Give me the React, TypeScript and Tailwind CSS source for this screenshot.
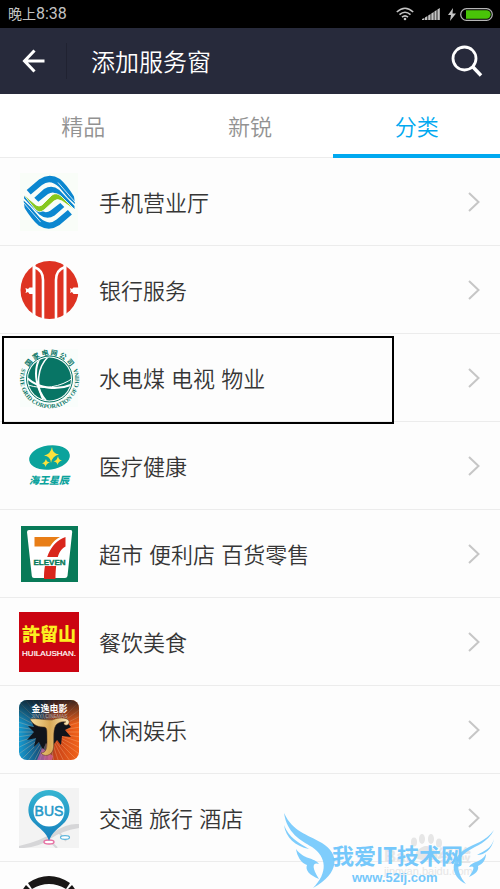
import { useState } from 'react';
import type { ReactNode } from 'react';

interface Category {
  name: string;
  logo: ReactNode;
  marked?: boolean;
}

const RAYS = Array.from({ length: 40 }, (_, i) => {
  const angle = (i * Math.PI) / 20;
  return `M30 32L${30 + 50 * Math.cos(angle)} ${32 + 50 * Math.sin(angle)}`;
}).join('');

const MobileHalf = () => (
  <>
    <path d="M7.700 18L20 7.500Q30.300 0.500 41 7Q48 13 55 24.500L56 32L49 25.700L40 15Q31 6.500 23 13L11.700 22.500Z" fill="#0b87d0" />
    <path d="M39 10.500L56 30" fill="none" stroke="#fff" strokeWidth="0.800" />
    <path d="M15.300 25.700L25 17Q33 12 40.300 18L55.500 34V37L41 24Q35 18 29 22L19.300 29.700Z" fill="#0b87d0" />
  </>
);

const MobileLogo = () => (
  <svg viewBox="0 0 60 60" className="size-full">
    <rect x="1" y="1" width="58" height="58" fill="#f9fdf8" />
    <MobileHalf />
    <g transform="rotate(180 30.300 30.300)">
      <MobileHalf />
    </g>
    <path d="M4 22L17 33Q20 35 23 33L33 23Q37 20 42 24L56 38L43 29Q38 26 35 29L25 38Q20 42 16 37Z" fill="#86c81e" stroke="#fff" strokeWidth="0.800" />
  </svg>
);

const BankLogo = () => (
  <svg viewBox="0 0 60 60" className="size-full">
    <circle cx="30.500" cy="30" r="29" fill="#de3322" />
    <g fill="none" stroke="#fff" strokeWidth="3">
      <path d="M15 4V60M46 4V60" />
      <path d="M15 7C21 9 24 13 24 20V60" strokeWidth="2.600" />
      <path d="M46 7C40 9 37 13 37 20V60" strokeWidth="2.600" />
    </g>
    <path d="M14 27.500H10.500L9 29L6.500 28Q7.500 30.500 6.500 33L9 32L10.500 34H14ZM60 27.500H54.500L53 29L51 28Q52 30.500 51 33L53 32L54.500 34H60Z" fill="#fff" />
  </svg>
);

const GridLogo = () => (
  <svg viewBox="0 0 60 60" className="size-full overflow-visible">
    <defs>
      <path id="grid-top" d="M6.500 31A24 24 0 0 1 54.500 31" />
      <path id="grid-bottom" d="M7 13A29.500 29.500 0 1 0 54 13" />
      <clipPath id="grid-disc">
        <circle cx="30.500" cy="31" r="21.500" />
      </clipPath>
    </defs>
    <rect x="1" y="1" width="58" height="58" fill="#f9fdfb" />
    <circle cx="30.500" cy="31" r="23" fill="#fff" stroke="#087565" strokeWidth="1" />
    <circle cx="30.500" cy="31" r="21.500" fill="#087565" />
    <g fill="none" stroke="#fff" clipPath="url(#grid-disc)">
      <path d="M22 8C13 22 17 42 28 54" strokeWidth="2" />
      <path d="M31 7C17 19 17 38 25 54" strokeWidth="1.500" />
      <path d="M8 30C20 41 39 43 54 36" strokeWidth="2" />
      <path d="M9 37C24 42 42 39 54 30" strokeWidth="1" />
    </g>
    <text fill="#087565" fontSize="7" fontWeight="700" fontFamily="'Noto Sans CJK SC', sans-serif">
      <textPath href="#grid-top" startOffset="50%" textAnchor="middle">国 家 电 网 公 司</textPath>
    </text>
    <text fill="#087565" fontSize="6" fontWeight="700" fontFamily="'Liberation Serif', serif">
      <textPath href="#grid-bottom" startOffset="50%" textAnchor="middle">STATE GRID CORPORATION OF CHINA</textPath>
    </text>
  </svg>
);

const PharmacyLogo = () => (
  <svg viewBox="0 0 60 60" className="size-full">
    <ellipse cx="30.500" cy="21.500" rx="20.500" ry="12" fill="#0ba39c" transform="rotate(-8 30.500 21.500)" />
    <g fill="#fbe23c">
      <path d="M33 11Q33.500 18 40 18.500Q33.500 19.500 32 27Q31.500 20 25 19.500Q31.500 18.500 33 11Z" />
      <path d="M39 20Q39.500 24 43 24.500Q39.500 25 38.500 29Q38 25.500 34.500 25.500Q38 24.500 39 20Z" />
      <path d="M27 23Q27.500 26 31 26.500Q27.500 27 26.500 31Q26 27.500 23 27.500Q26 26.500 27 23Z" />
    </g>
    <text x="30" y="48" textAnchor="middle" fill="#0ba39c" fontSize="10" fontWeight="900" fontStyle="italic" fontFamily="'Noto Sans CJK SC', sans-serif">
      海王星辰
    </text>
  </svg>
);

const StoreLogo = () => (
  <svg viewBox="0 0 60 60" className="size-full">
    <rect x="2" y="2" width="57" height="56" fill="#087a58" />
    <path d="M10 6H51.500Q53.500 6 53.200 8L48.500 52Q48 54 46 54H15Q13 54 12.800 52L8 8Q8 6 10 6Z" fill="#fff" />
    <path d="M15.500 13H41Q35 16 31 22.500H15.500Z" fill="#e87e17" />
    <path d="M46.500 13V22.500C40 26 37 33 36.500 55H25C25 37 30 19 46.500 13Z" fill="#d9261c" />
    <rect x="13" y="33" width="35" height="9" fill="#fff" />
    <text x="30.500" y="41" textAnchor="middle" fill="#087a58" stroke="#087a58" strokeWidth="0.400" fontSize="8" fontWeight="700" fontFamily="'Liberation Sans', sans-serif">
      ELEVEN
    </text>
  </svg>
);

const DessertLogo = () => (
  <svg viewBox="0 0 60 60" className="size-full">
    <rect width="60" height="60" fill="#cb0411" />
    <text x="30" y="29" textAnchor="middle" fill="#fcee21" fontSize="18" fontWeight="900" fontFamily="'Noto Sans CJK TC', sans-serif">
      許留山
    </text>
    <text x="30" y="44" textAnchor="middle" fill="#fff" stroke="#fff" strokeWidth="0.200" fontSize="8" fontFamily="'Liberation Sans', sans-serif">
      HUILAUSHAN.
    </text>
  </svg>
);

const CinemaLogo = () => (
  <svg viewBox="0 0 60 60" className="size-full">
    <defs>
      <linearGradient id="cinema-sky">
        <stop offset="0" stopColor="#179bd0" />
        <stop offset="0.350" stopColor="#164f7a" />
        <stop offset="0.600" stopColor="#c84318" />
        <stop offset="1" stopColor="#f2641c" />
      </linearGradient>
      <linearGradient id="cinema-shade" x1="0" y1="0" x2="0" y2="1">
        <stop offset="0" stopColor="#101820" stopOpacity="0.800" />
        <stop offset="0.400" stopColor="#101820" stopOpacity="0" />
      </linearGradient>
      <linearGradient id="cinema-gold">
        <stop offset="0" stopColor="#f7e0a2" />
        <stop offset="0.500" stopColor="#d9a854" />
        <stop offset="1" stopColor="#f9e8bd" />
      </linearGradient>
      <clipPath id="cinema-tile">
        <rect width="60" height="60" rx="8" />
      </clipPath>
    </defs>
    <g clipPath="url(#cinema-tile)">
      <rect width="60" height="60" fill="url(#cinema-sky)" />
      <path d={RAYS} stroke="#ffd0a0" strokeWidth="0.700" opacity="0.400" />
      <rect width="60" height="60" fill="url(#cinema-shade)" />
      <path d="M12 20L46 20L52 27L46 30L52 37L43 36L42 45L38 40L32 48L27 43L24 50L20 42L15 47L17 38L8 40L15 32L9 26L15 27Z" fill="#10141b" />
      <path d="M18 60L23 48L34 56L33 60Z" fill="#e765b0" opacity="0.600" />
    </g>
    <path d="M11 19C18 18 25 20 33 20C38 18 43 17 48 19C52 21 50 26 46 25C44 24 45 22 47 22C42 21 39 23 37 25C33 31 36 43 34 50C32 56 25 57 22 53C29 53 28 44 28 36C28 29 28 27 24 27C17 27 13 23 11 19Z" fill="url(#cinema-gold)" stroke="#56371b" strokeWidth="0.500" />
    <text x="30.500" y="12" textAnchor="middle" fill="#fff" fontSize="9" fontWeight="700" fontFamily="'Noto Sans CJK SC', serif">
      金逸电影
    </text>
    <text x="30.500" y="18" textAnchor="middle" fill="#a3a7a8" fontSize="5" fontFamily="'Liberation Sans', sans-serif">
      JINYI CINEMAS
    </text>
  </svg>
);

const BusLogo = () => (
  <svg viewBox="0 0 60 60" className="size-full">
    <defs>
      <linearGradient id="bus-pin" x1="0" y1="0" x2="0" y2="1">
        <stop offset="0" stopColor="#35b5d2" />
        <stop offset="1" stopColor="#167fbd" />
      </linearGradient>
    </defs>
    <rect width="60" height="60" fill="#f3f3f3" />
    <path d="M0 58Q22 53 35 44T60 36V40Q42 43 31 51T5 60H0Z" fill="#d6d6d8" />
    <path d="M30 52L38 60M39 43L47 53" stroke="#d6d6d8" strokeWidth="2" />
    <ellipse cx="46" cy="49.500" rx="4.500" ry="1.800" fill="#fff" stroke="#5db6dd" strokeWidth="1.200" />
    <ellipse cx="30" cy="54" rx="5" ry="2" fill="#fff" stroke="#e76fa3" strokeWidth="1.400" />
    <path d="M30 53C28 45 20 40 14 34C4 23 11 2 30 2S56 23 46 34C40 40 32 45 30 53Z" fill="url(#bus-pin)" />
    <circle cx="30" cy="23" r="15.500" fill="#fff" />
    <text x="30" y="28" textAnchor="middle" fill="#2598c8" stroke="#2598c8" strokeWidth="0.500" fontSize="14" fontFamily="'Liberation Sans', sans-serif">
      BUS
    </text>
  </svg>
);

const RingLogo = () => (
  <svg viewBox="0 0 60 60" className="size-full">
    <path d="M9 7Q30 -7 51 7L47 13Q30 3 13 13Z" fill="#191716" />
    <path d="M7 9L11 13Q7 18 5 24L0 23Q2 15 7 9ZM53 9L49 13Q53 18 55 24L60 23Q58 15 53 9Z" fill="#191716" />
  </svg>
);

const categories: Category[] = [
  { name: '手机营业厅', logo: <MobileLogo /> },
  { name: '银行服务', logo: <BankLogo /> },
  { name: '水电煤 电视 物业', logo: <GridLogo />, marked: true },
  { name: '医疗健康', logo: <PharmacyLogo /> },
  { name: '超市 便利店 百货零售', logo: <StoreLogo /> },
  { name: '餐饮美食', logo: <DessertLogo /> },
  { name: '休闲娱乐', logo: <CinemaLogo /> },
  { name: '交通 旅行 酒店', logo: <BusLogo /> },
  { name: '', logo: <RingLogo /> },
];

const tabs = ['精品', '新锐', '分类'];

const StatusBar = () => (
  <div className="flex h-7 shrink-0 items-center justify-between bg-black pl-2 pr-[7px] text-[#c4c4c4]">
    <div className="flex items-center text-sm">
      <span>晚上</span>
      <span className="font-[Roboto] text-base">8:38</span>
    </div>
    <div className="flex items-center">
      <svg viewBox="0 0 18 14" className="mr-2 h-[14px] w-[18px]" fill="none" stroke="currentColor" strokeWidth="1.600">
        <path d="M0.800 5Q9 -2.500 17.200 5M3.500 7.700Q9 2.800 14.500 7.700M6 10.200Q9 7.500 12 10.200" />
        <circle cx="9" cy="12" r="1.300" fill="currentColor" stroke="none" />
      </svg>
      <svg viewBox="0 0 18 12" className="mr-2 h-3 w-[18px]" fill="currentColor">
        <path d="M0 12V11L2.400 10V12ZM3 12V9.500L5.400 8V12ZM6.200 12V7.500L8.600 6V12ZM9.300 12V5.500L11.700 4V12ZM12.400 12V3.500L14.600 2V12ZM15.400 12V1.500L17.800 0V12Z" />
      </svg>
      <svg viewBox="0 0 8 13" className="mr-1 h-[13px] w-2" fill="currentColor">
        <path d="M5 0L0 7H3L2 13L8 5.500H4.500Z" />
      </svg>
      <svg viewBox="0 0 33 13" className="h-[13px] w-[33px]">
        <rect x="0.700" y="0.700" width="31.600" height="11.600" rx="5.800" fill="none" stroke="#b5b5b5" strokeWidth="1.200" />
        <path d="M6 2.300H26.500A4.200 4.200 0 0 1 26.500 10.700H6Z" fill="#49c408" />
      </svg>
    </div>
  </div>
);

const Header = () => (
  <header className="flex h-[66px] shrink-0 items-center bg-[#272a3b] pl-[21px] pr-[17px] text-white">
    <button type="button" aria-label="返回" className="flex h-9 w-[46px] items-center border-r border-[#202231]">
      <svg viewBox="0 0 24 24" className="size-6" fill="none" stroke="currentColor" strokeWidth="3">
        <path d="M13.500 1.500L3.500 12L13.500 22.500M3 12H23.500" />
      </svg>
    </button>
    <h1 className="ml-6 flex-1 pt-1 text-2xl font-[350]">添加服务窗</h1>
    <button type="button" aria-label="搜索">
      <svg viewBox="0 0 32 32" className="size-8" fill="none" stroke="currentColor" strokeWidth="2.800">
        <circle cx="13.500" cy="13.500" r="11.500" />
        <path d="M21.500 21.500L30 30.500" strokeWidth="3.400" />
      </svg>
    </button>
  </header>
);

const Watermark = () => (
  <svg viewBox="0 0 220 80" className="pointer-events-none absolute bottom-0 right-0 h-20 w-[220px]">
    <g fill="#e6e6e6">
      <ellipse cx="134" cy="33" rx="3" ry="4.500" />
      <ellipse cx="142" cy="30" rx="3" ry="5" />
      <ellipse cx="151" cy="30" rx="3" ry="5" />
      <ellipse cx="159" cy="34" rx="3" ry="4.500" />
      <path d="M146 37C151 37 160 44 157 49C154 52 140 52 136 49C133 44 141 37 146 37Z" />
      <text x="104" y="53" fontSize="17" fontWeight="700" fontFamily="'Liberation Sans', 'Noto Sans CJK SC', sans-serif">
        Bai
      </text>
      <text x="157" y="53" fontSize="17" fontWeight="700" fontFamily="'Noto Sans CJK SC', sans-serif">
        经验
      </text>
      <text x="104" y="66" fontSize="11" fontFamily="'Liberation Sans', sans-serif">
        jingyan.baidu.com
      </text>
    </g>
    <g fill="#7fcdfc">
      <path d="M4 4C13 23 27 25 42 34C60 45 60 64 33 79C48 64 47 48 32 38C20 31 7 24 4 4Z" />
      <path d="M4 16C9 29 18 33 29 40C15 37 6 29 4 16Z" />
      <path d="M16 40C24 51 34 48 39 55C34 53 30 56 39 70C29 66 25 61 27 56C21 54 17 47 16 40Z" />
      <path d="M214 21C207 34 197 36 188 42C176 49 175 62 186 75C170 67 170 51 184 41C195 34 205 33 214 21Z" />
      <path d="M214 30C211 40 204 42 197 46C205 46 212 40 214 30Z" />
      <path d="M206 45C201 54 192 52 189 58C195 56 195 59 189 68C196 65 199 61 198 57C203 55 206 50 206 45Z" />
    </g>
    <text x="52" y="55" fill="#75c8fb" fontSize="22" fontWeight="700" fontFamily="'Noto Sans CJK SC', sans-serif">
      我爱IT技术网
    </text>
    <text x="72" y="73" fill="#75c8fb" fontSize="13" fontWeight="700" fontFamily="'Liberation Sans', sans-serif">
      www.52ij.com
    </text>
  </svg>
);

const App = () => {
  const [activeTab, setActiveTab] = useState('分类');

  return (
    <div className="relative flex h-screen flex-col overflow-hidden bg-white font-['Liberation_Sans','Noto_Sans_CJK_SC',sans-serif]">
      <StatusBar />
      <Header />
      <nav className="flex h-16 shrink-0 border-b border-[#ececec]">
        {tabs.map((tab) => (
          <button
            key={tab}
            type="button"
            onClick={() => setActiveTab(tab)}
            className={
              tab === activeTab
                ? '-mb-px flex-1 border-b-4 border-[#00a9f0] pt-1.5 text-[22px] font-[350] text-[#00a9f0]'
                : '-mb-px flex-1 border-b-4 border-transparent pt-1.5 text-[22px] font-[350] text-[#929292]'
            }
          >
            {tab}
          </button>
        ))}
      </nav>
      <main className="min-h-0 flex-1 overflow-hidden bg-[#fdfdfd]">
        <ul>
          {categories.map((category, index) => (
            <li key={index} className="relative h-[88px] border-b border-[#ececec]">
              <a href="#" aria-label={category.name || '更多'} className="flex h-full items-center pl-[19px] pr-5">
                <span className="size-[60px] shrink-0">{category.logo}</span>
                <span className="ml-5 flex-1 pt-1 text-[22px] font-[350] text-[#363636]">{category.name}</span>
                <svg viewBox="0 0 12 20" className="h-5 w-3" fill="none" stroke="#c6c6c6" strokeWidth="2">
                  <path d="M1 1L10.500 10L1 19" />
                </svg>
              </a>
              {category.marked && (
                <span className="pointer-events-none absolute left-0.5 right-[106px] top-0.5 z-10 h-[88px] border-2 border-black" />
              )}
            </li>
          ))}
        </ul>
      </main>
      <Watermark />
    </div>
  );
};

export default App;
